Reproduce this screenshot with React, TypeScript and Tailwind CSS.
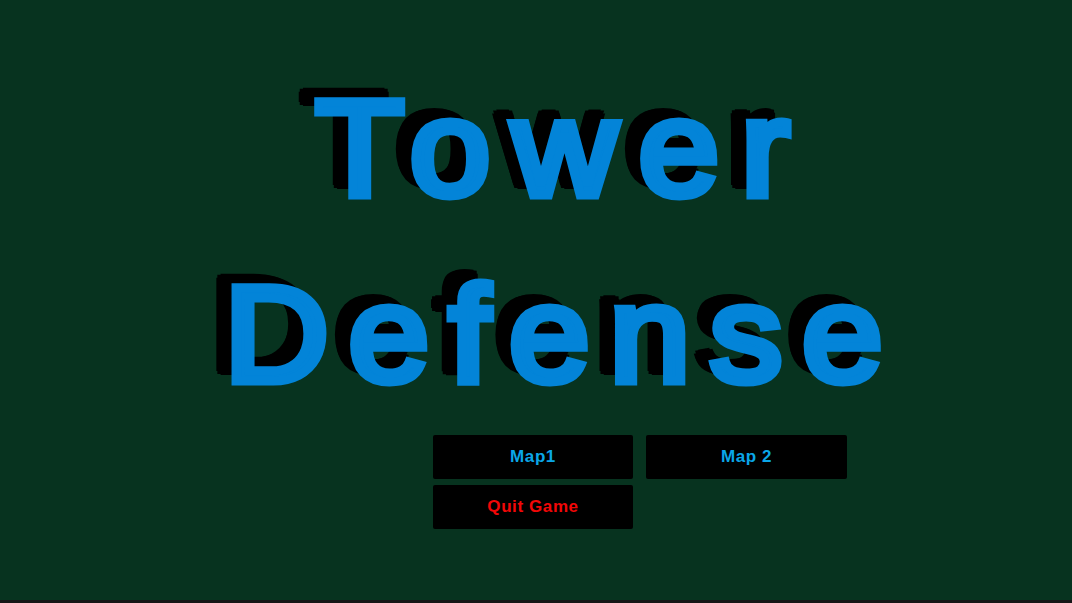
export default function App() {
  // Thin Liberation Sans fattened with a same-colour stroke and widened a touch;
  // the black drop shadow is a ring of hard shadows so it is as thick as the letters.
  const titleLine =
    "block font-['Liberation_Sans',Arial,sans-serif] text-[136px] text-[#0384d8] [-webkit-text-stroke:9px_#0384d8] [text-shadow:-19px_-10px_0_#000,-11px_-10px_0_#000,-15px_-14px_0_#000,-15px_-6px_0_#000,-18px_-13px_0_#000,-12px_-13px_0_#000,-18px_-7px_0_#000,-12px_-7px_0_#000,-15px_-10px_0_#000]";

  const button =
    "flex h-[44px] items-center justify-center rounded-[2px] bg-black font-['Liberation_Sans',Arial,sans-serif] text-[17px] font-bold tracking-[0.6px]";

  return (
    <div className="flex h-[603px] w-full flex-col overflow-hidden bg-[#07331f]">
      <main className="flex-1 pt-[54px]">
        <h1 className="scale-x-[1.06] pl-[52px] text-center font-normal">
          <span className={`${titleLine} leading-[188px] tracking-[21px]`}>Tower</span>
          <span className={`${titleLine} leading-[184px] tracking-[19px]`}>Defense</span>
        </h1>

        <div className="mt-[9px] ml-[433px] grid w-[414px] grid-cols-[200px_201px] gap-x-[13px] gap-y-[6px]">
          <button className={`${button} text-[#0aa6e8]`}>Map1</button>
          <button className={`${button} text-[#0aa6e8]`}>Map 2</button>
          <button className={`${button} text-[#f20707]`}>Quit Game</button>
        </div>
      </main>
      <div className="h-[3px] bg-[#161616]" />
    </div>
  );
}
